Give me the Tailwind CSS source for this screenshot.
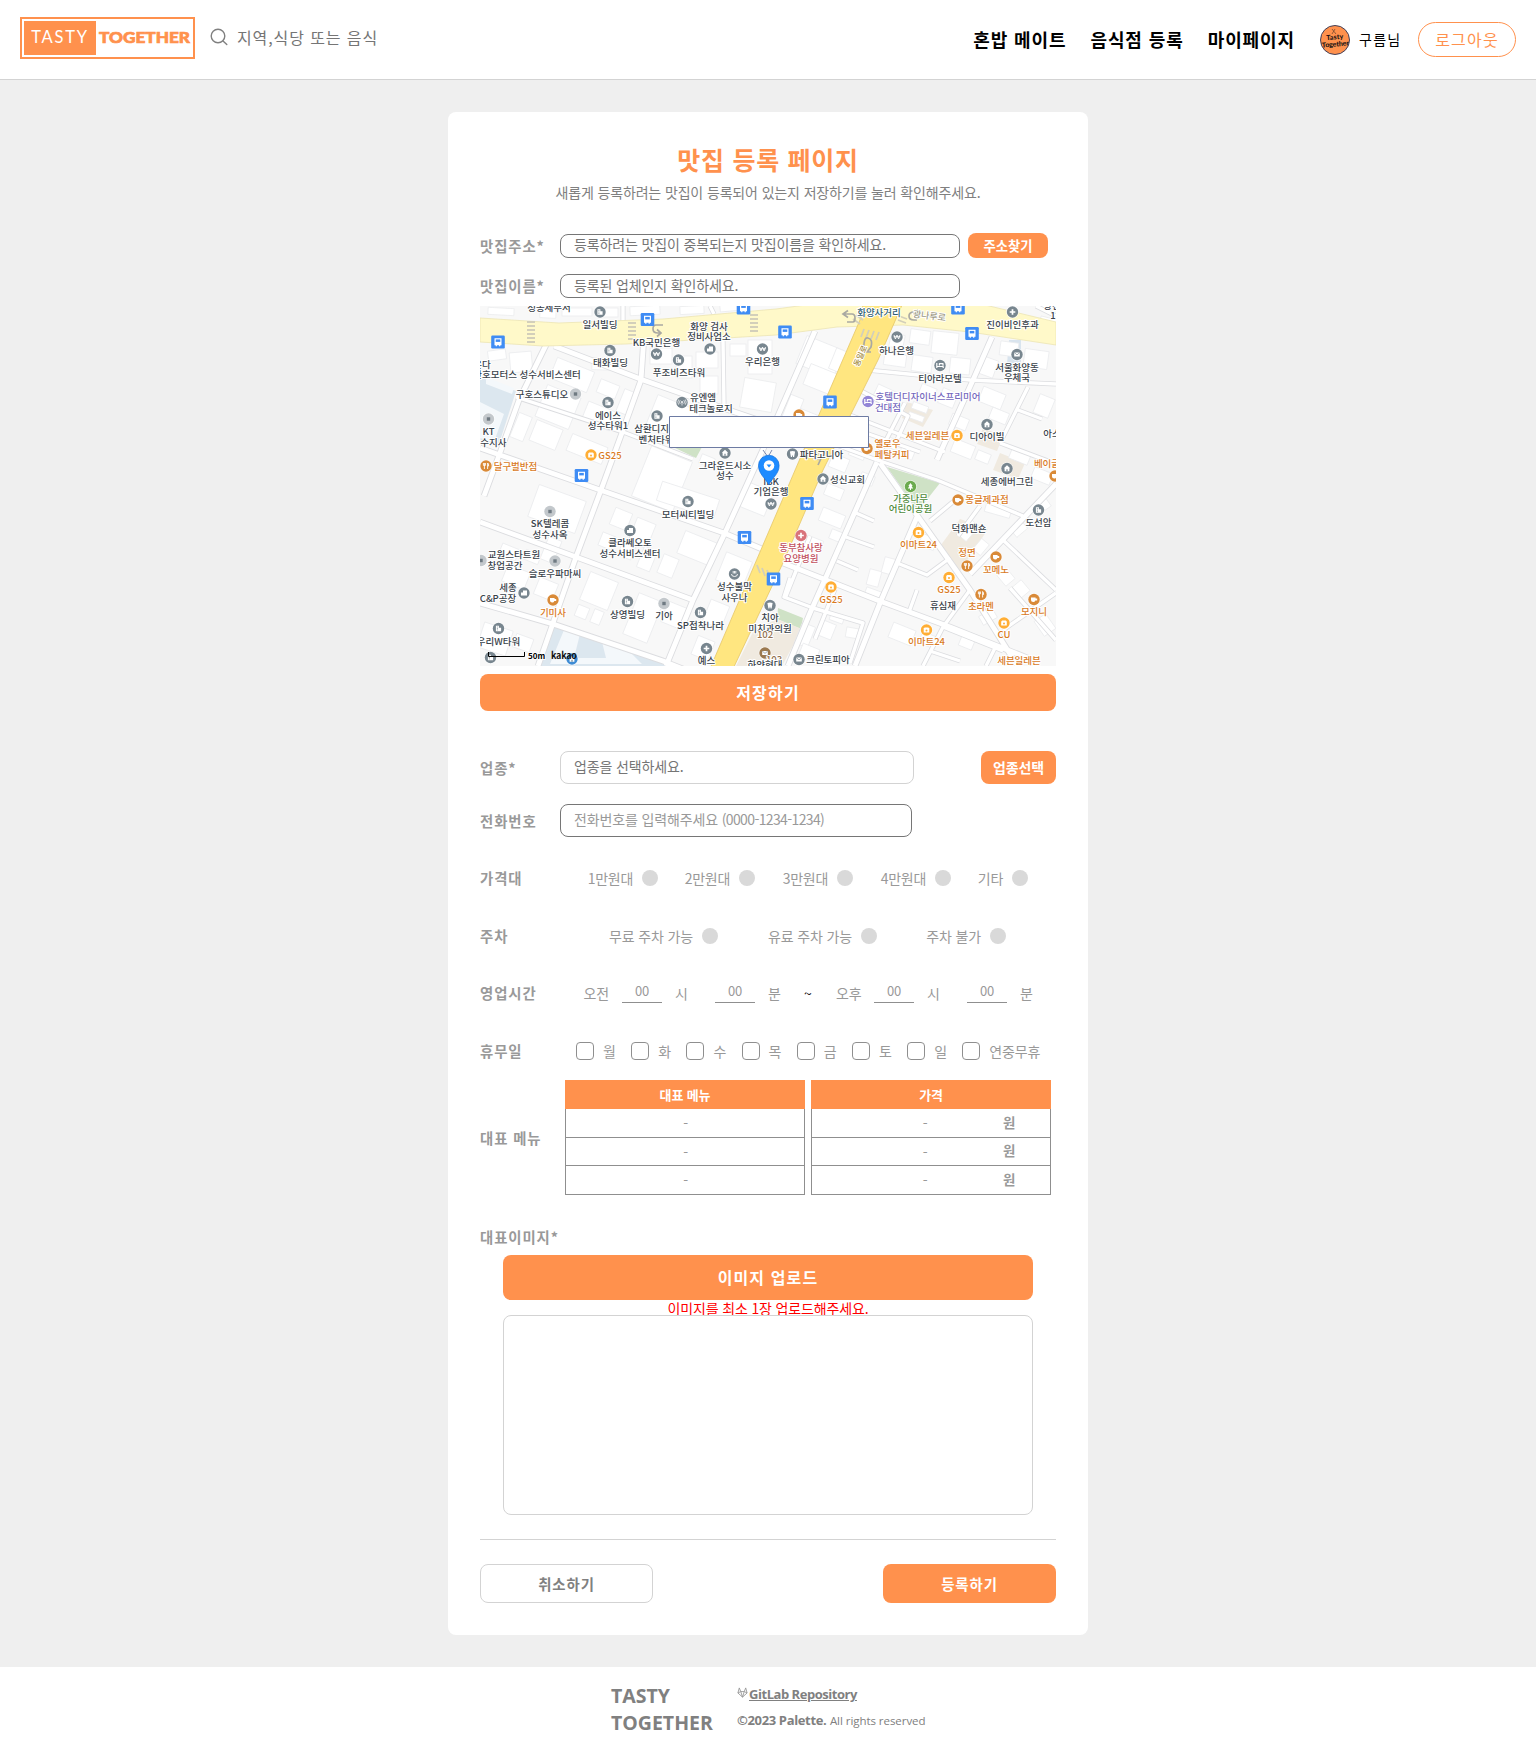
<!DOCTYPE html>
<html lang="ko">
<head>
<meta charset="utf-8">
<title>맛집 등록 페이지</title>
<script src="https://cdn.jsdelivr.net/npm/@tailwindcss/browser@4"></script>
</head>
<body class="bg-[#efefef] font-['Noto_Sans_CJK_KR',sans-serif] text-sm leading-none tracking-[-0.14px] text-[#999]">

<header class="flex h-20 items-center border-b border-[#d3d3d3] bg-white px-5">
  <div class="mb-1 flex h-[42px] w-[175px] items-center border-2 border-[#ff914d] p-0.5 font-[Lato,sans-serif]">
    <div class="flex h-[34px] w-[72px] shrink-0 items-center justify-center bg-[#ff914d] text-[16.500px] tracking-[1.800px] text-white">TASTY</div>
    <svg class="ml-0.5 h-[34px] w-[94px]" viewBox="0 0 94 34"><text x="1" y="22.5" textLength="92" lengthAdjust="spacingAndGlyphs" font-family="Lato, sans-serif" font-weight="900" font-size="16" letter-spacing="0" fill="#ff914d" stroke="#ff914d" stroke-width=".7">TOGETHER</text></svg>
  </div>
  <svg class="mb-1.5 ml-[15px] size-[18px]" viewBox="0 0 18 18" fill="none" stroke="#808080" stroke-width="1.4" stroke-linecap="round"><circle cx="8" cy="8" r="6.8"/><path d="M13 13l3.8 3.6"/></svg>
  <span class="mb-[5px] ml-[9px] text-base leading-none tracking-[.9px] text-[#757575]">지역,식당 또는 음식</span>
  <nav class="ml-auto flex items-center text-black">
    <span class="mr-6 mb-0.5 text-lg leading-none font-bold tracking-[.9px]">혼밥 메이트</span>
    <span class="mr-6 mb-0.5 text-lg leading-none font-bold tracking-[.9px]">음식점 등록</span>
    <span class="mr-[25px] mb-0.5 text-lg leading-none font-bold tracking-[.9px]">마이페이지</span>
    <svg class="size-[30px]" viewBox="0 0 30 30"><circle cx="15" cy="15" r="14.5" fill="#ff914d" stroke="#41405a"/><path d="M12 4l4 5M15 4l-3 5" stroke="#7a4a30" stroke-width=".8"/><g font-family="Lato, sans-serif" font-weight="900" font-size="7" fill="#1d1414" text-anchor="middle" transform="rotate(-5 15 15)"><text x="15" y="14.5" textLength="17">Tasty</text><text x="15" y="21.5" textLength="27" lengthAdjust="spacingAndGlyphs">Together</text></g></svg>
    <span class="mb-px ml-[9px] w-[59px] tracking-[1.300px]">구름님</span>
    <button class="flex h-[35px] w-[98px] items-center justify-center rounded-full border border-[#ff914d] pb-0.5 text-base leading-none tracking-[1.200px] text-[#ff914d]">로그아웃</button>
  </nav>
</header>

<main class="mx-auto my-8 flex w-[640px] flex-col rounded-lg bg-white p-8">
  <h1 class="flex h-8 items-center justify-center pb-0.5 text-[25px] leading-none font-bold tracking-[.7px] text-[#ff914d]">맛집 등록 페이지</h1>
  <p class="mt-[7px] flex h-5 items-center justify-center pb-0.5 text-[#808080]">새롭게 등록하려는 맛집이 등록되어 있는지 저장하기를 눌러 확인해주세요.</p>

  <div class="mt-[30px] flex h-[25px] items-center">
    <span class="w-20 pt-px text-[14.4px] font-bold tracking-[.9px]">맛집주소*</span>
    <div class="flex h-6 w-[400px] items-center rounded-lg border border-[#767676] px-[13px] pb-[3px] text-[#757575]">등록하려는 맛집이 중복되는지 맛집이름을 확인하세요.</div>
    <button class="ml-2 flex h-[25px] w-20 items-center justify-center rounded-lg bg-[#ff914d] text-[13.33px] font-bold tracking-normal text-white">주소찾기</button>
  </div>
  <div class="mt-4 flex h-6 items-center">
    <span class="w-20 text-[14.4px] font-bold tracking-[.9px]">맛집이름*</span>
    <div class="flex h-6 w-[400px] items-center rounded-lg border border-[#767676] px-[13px] pb-[3px] text-[#757575]">등록된 업체인지 확인하세요.</div>
  </div>

  <svg id="map" class="mt-2 h-[360px] w-[576px] tracking-normal" viewBox="0 0 576 360" font-family="'Noto Sans CJK KR', sans-serif">
    <defs>
      <g id="bus"><rect x="-6.8" y="-6.5" width="13.6" height="13" rx="1.2" fill="#3f8cf4"/><path d="M-3.5-3.8h7v7h-1.2v1h-1.2v-1h-2.2v1h-1.2v-1h-1.2z" fill="#fff"/><path d="M-2.3-2.6h4.6v2.5h-4.6z" fill="#3f8cf4"/></g>
      <g id="bld"><path d="M-2.6 2.8v-5.6h3v2h2.2v3.6z" fill="#fff"/><path d="M-1.6-1.5h1M-1.6 0h1M-1.6 1.4h1" stroke="#78868f" stroke-width=".7"/></g>
      <g id="won"><path d="M-3-2l1.4 4L0-2l1.6 4L3-2M-3.4-.2h6.8" fill="none" stroke="#fff" stroke-width=".9"/></g>
      <g id="car"><path d="M-3 2.4v-3h2v-2h4v5z" fill="#fff"/></g>
      <g id="ant"><path d="M0-.5v3.500M-1.800-2.400q-1.400 1.800 0 3.800M1.800-2.400q1.400 1.800 0 3.800M-3.300-3q-1.800 2.600 0 5.200M3.300-3q1.800 2.600 0 5.200" fill="none" stroke="#fff" stroke-width=".7"/><circle cy="-.6" r=".9" fill="#fff"/></g>
      <g id="sq"><rect x="-1.7" y="-1.7" width="3.4" height="3.4" fill="#6f7a82"/></g>
      <g id="cross"><path d="M0-2.8v5.6M-2.8 0h5.6" stroke="#fff" stroke-width="1.7"/></g>
      <g id="bed"><path d="M-3.2-2.4v4.8M-3.2 1h6.4v1.4M-.6 0v-1.8h3.6v2" fill="none" stroke="#fff" stroke-width="1.2"/></g>
      <g id="spa"><path d="M-3 0q0 2.500 3 2.500T3 0M-1.300-3v2.500M0-3v2.500M1.300-3v2.500" fill="none" stroke="#fff" stroke-width=".9"/></g>
      <g id="home"><path d="M-3.200-.2L0-3.200l3.200 3h-.8v3h-4.800v-3z" fill="#fff"/><path d="M-.6 2.800V.8H.6v2z" fill="#78868f"/></g>
      <g id="store"><path d="M-2.8 2.6v-4l1-1.2h3.6l1 1.2v4z" fill="#fff"/><circle cy=".5" r="1" fill="#ffae35"/></g>
      <g id="cup"><path d="M-3-2h4.6v1h1.6v2H1.4Q.8 2.6-.8 2.6-3 2.6-3 .6z" fill="#fff"/></g>
      <g id="fork"><path d="M-1.6-3v6M-2.6-3v2.4h2V-3M1.6 3v-6q1.2.6 1 3h-1" fill="none" stroke="#fff" stroke-width=".9"/></g>
      <g id="tree"><path d="M0-3.4l2.2 3h-1L2.6 2H.5v1.4h-1V2h-2.1l1.4-2.4h-1z" fill="#fff"/></g>
      <g id="mail"><path d="M-2.8-2h5.6v4h-5.6z" fill="#fff"/><path d="M-2.8-2L0 .4 2.8-2" fill="none" stroke="#78868f" stroke-width=".7"/></g>
      <g id="tooth"><path d="M-2.6-2.4Q0-3.4 2.6-2.4L1.6 3H.6L0 .8-.6 3h-1z" fill="#fff"/></g>
      <clipPath id="clip"><path d="M0 0h576v360H0z"/></clipPath>
    </defs>
    <g clip-path="url(#clip)">
      <path d="M0 0h576v360H0z" fill="#f8f8f8"/>
      <path d="M0 71l36 14-18 56-18-6zM74 321l112 36 8 3H58z" fill="#dce7ef"/>
      <path d="M6 71l28 11-2 6-26-10zM84 324l16 4-6 24h32l-4-16 30 12 10 10H70zM0 96l24 12-10 28-14-4z" fill="#f4f8fb"/>
      <path d="M407 161l53 16-22 28zM193 141h29l-6 11zM298 302l25 10-2 11-24-10z" fill="#cfe2c6"/>
      <path d="M427 96l26 8-10 17-21-9zM503 122l20 8-6 15-20-7zM520 147l25 10-7 16-25-9zM480 213l28 10-28 42-22-22zM297 313l25 10-20 37h-46l18-36z" fill="#f0eae0"/>
      <path d="M459 34h12v24h-14z" transform="translate(70 0)" fill="#d9e4ee"/>
      <g id="buildings" fill="#fff" stroke="#ebecee" stroke-width=".8"></g>
      <g fill="none" stroke-linejoin="round">
        <g id="casing" stroke="#dcdde0"></g>
        <g id="surface" stroke="#fff"></g>
      </g>
      <path d="M0 12l79 5 104-4L296 3l37-5h168l75 18v23l-86-13-67-7-66 2-61 8-150 9-83 2-63-4z" fill="#fff9c9" stroke="#ece4b4" stroke-width=".8"/>
      <path d="M383-1h39l-24 55-55 110-41 95-50 106h-23l96-224 55-127z" fill="#ffe680" stroke="#e6c766" stroke-width=".8"/>
      <g stroke="#d3cfba" stroke-width="1.8" fill="none">
        <path d="M47 16h8M47 20h8M47 24h8M47 28h8M47 32h8M47 36h8M148 17h8M148 21h8M148 25h8M148 29h8M148 33h8M270 9h8M270 13h8M270 17h8M270 21h8M270 25h8"/>
        <path d="M384 23l-3 8M389 24l-3 8M394 25l-3 8M399 26l-3 8M277 259l3 8M282 262l3 8M287 264l3 8M376 9l7 5M373 13l7 5M418 14l8 3M419 10l8 3M333 146l8 3M331 151l8 3"/>
      </g>
      <g fill="none" stroke="#aaa9a2" stroke-width="1.700"><path d="M183 19h-7q-3 0-3 4t5 4h2m-3-3.500l4 3.500-4 3.500M367 16h6q2 0 2-4t-3-4h-8m4-3.500L363 8l5 3.500M437 14h-3q-5 0-5-4t5-4h8m-4 3v-4l5 5h-5M384 45q-1-14 4-13t3 9l-4 5m-1-5v5h5M338 159l6-13"/></g>
      <g id="pois"></g>
      <path d="M283 144l5 7 4-7" fill="none" stroke="#7d8ab0" stroke-width="1"/>
      <path d="M288.700 179C285.500 172 278.500 168 278.500 159.500a10.300 10.300 0 0 1 20.600 0C299.100 168 292 172 288.700 179z" fill="#1e8bff" stroke="#1271dd" stroke-width=".7"/><circle cx="289" cy="159.500" r="5.300" fill="#fff"/><path d="M286.500 158.500h5l-2.500 3z" fill="#1e8bff"/>
      <path d="M189.500 110.500h199v31h-199z" fill="#fff" stroke="#6d7ba3"/>
      <path d="M8.500 346v4.500h36V346" fill="none" stroke="#000"/>
      <text x="48" y="353" font-size="8" font-weight="700" fill="#000" stroke="#fff" stroke-width="1.500" paint-order="stroke">50m</text>
      <text x="71" y="352.500" font-size="9" font-weight="700" fill="#111" textLength="26">kakao</text>
    </g>
  </svg>

  <button class="mt-2 flex h-[37px] items-center justify-center rounded-lg bg-[#ff914d] pb-px text-base leading-none font-bold tracking-[1.200px] text-white">저장하기</button>

  <div class="mt-10 flex h-[33px] items-center">
    <span class="w-20 pt-0.5 text-[14.4px] font-bold tracking-[.9px]">업종*</span>
    <div class="flex h-[33px] w-[354px] items-center rounded-lg border border-[#d3d3d3] px-[13px] pb-[3px] text-[#757575]">업종을 선택하세요.</div>
    <button class="ml-auto flex h-[33px] w-[75px] items-center justify-center rounded-lg bg-[#ff914d] pb-px text-sm leading-none font-bold text-white">업종선택</button>
  </div>
  <div class="mt-5 flex h-[33px] items-center">
    <span class="w-20 pt-0.5 text-[14.4px] font-bold tracking-[.9px]">전화번호</span>
    <div class="flex h-[33px] w-[352px] items-center rounded-lg border border-[#767676] px-[13px] pb-[3px]"><span>전화번호를 입력해주세요 <span class="tracking-[-.62px]">(0000-1234-1234)</span></span></div>
  </div>

  <div class="mt-[33px] flex h-4 items-center">
    <span class="w-20 text-[14.4px] font-bold tracking-[.9px]">가격대</span>
    <label class="flex w-[98px] items-center justify-end gap-[9px] tracking-[-.3px]">1만원대<i class="size-4 rounded-full bg-[#d9d9d9]"></i></label>
    <label class="flex w-[97px] items-center justify-end gap-[9px] tracking-[-.3px]">2만원대<i class="size-4 rounded-full bg-[#d9d9d9]"></i></label>
    <label class="flex w-[98px] items-center justify-end gap-[9px] tracking-[-.3px]">3만원대<i class="size-4 rounded-full bg-[#d9d9d9]"></i></label>
    <label class="flex w-[98px] items-center justify-end gap-[9px] tracking-[-.3px]">4만원대<i class="size-4 rounded-full bg-[#d9d9d9]"></i></label>
    <label class="flex w-[77px] items-center justify-end gap-[9px] tracking-[-.3px]">기타<i class="size-4 rounded-full bg-[#d9d9d9]"></i></label>
  </div>
  <div class="mt-[42px] flex h-4 items-center">
    <span class="w-20 text-[14.4px] font-bold tracking-[.9px]">주차</span>
    <label class="flex w-[158px] items-center justify-end gap-[9px]">무료 주차 가능<i class="size-4 rounded-full bg-[#d9d9d9]"></i></label>
    <label class="flex w-[159px] items-center justify-end gap-[9px]">유료 주차 가능<i class="size-4 rounded-full bg-[#d9d9d9]"></i></label>
    <label class="flex w-[129px] items-center justify-end gap-[9px]">주차 불가<i class="size-4 rounded-full bg-[#d9d9d9]"></i></label>
  </div>
  <div class="mt-[39px] mb-px flex h-5 items-center">
    <span class="w-20 pt-px text-[14.4px] font-bold tracking-[.9px]">영업시간</span>
    <span class="w-[49px] text-right">오전</span>
    <span class="ml-[13px] flex h-[19px] w-10 items-center justify-center border-b border-[#8f8f8f] pb-1 text-[13px]">00</span>
    <span class="ml-[13px] w-[13px]">시</span>
    <span class="ml-[27px] flex h-[19px] w-10 items-center justify-center border-b border-[#8f8f8f] pb-1 text-[13px]">00</span>
    <span class="ml-[13px] w-[13px]">분</span>
    <span class="ml-[23px] w-2 text-black">~</span>
    <span class="ml-6 w-[25px] whitespace-nowrap">오후</span>
    <span class="ml-[13px] flex h-[19px] w-10 items-center justify-center border-b border-[#8f8f8f] pb-1 text-[13px]">00</span>
    <span class="ml-[13px] w-[13px]">시</span>
    <span class="ml-[27px] flex h-[19px] w-10 items-center justify-center border-b border-[#8f8f8f] pb-1 text-[13px]">00</span>
    <span class="ml-[13px] w-[13px]">분</span>
  </div>
  <div class="mt-[38px] flex h-[18px] items-center">
    <span class="w-24 text-[14.4px] font-bold tracking-[.9px]">휴무일</span>
    <label class="flex w-[55.200px] items-center gap-[9px]"><i class="size-[18px] rounded border border-[#8f8f8f]"></i>월</label>
    <label class="flex w-[55.200px] items-center gap-[9px]"><i class="size-[18px] rounded border border-[#8f8f8f]"></i>화</label>
    <label class="flex w-[55.200px] items-center gap-[9px]"><i class="size-[18px] rounded border border-[#8f8f8f]"></i>수</label>
    <label class="flex w-[55.200px] items-center gap-[9px]"><i class="size-[18px] rounded border border-[#8f8f8f]"></i>목</label>
    <label class="flex w-[55.200px] items-center gap-[9px]"><i class="size-[18px] rounded border border-[#8f8f8f]"></i>금</label>
    <label class="flex w-[55.200px] items-center gap-[9px]"><i class="size-[18px] rounded border border-[#8f8f8f]"></i>토</label>
    <label class="flex w-[55.200px] items-center gap-[9px]"><i class="size-[18px] rounded border border-[#8f8f8f]"></i>일</label>
    <label class="flex items-center gap-[9px] whitespace-nowrap"><i class="size-[18px] rounded border border-[#8f8f8f]"></i>연중무휴</label>
  </div>

  <div class="mt-5 flex h-[115px] items-center">
    <span class="w-[85px] pt-0.5 text-[14.4px] font-bold tracking-[.9px]">대표 메뉴</span>
    <div class="w-60">
      <div class="flex h-[29px] items-center justify-center bg-[#ff914d] text-[13px] font-bold text-white">대표 메뉴</div>
      <div class="flex h-[29px] items-center justify-center border border-t-0 border-[#8f8f8f] pl-px">-</div>
      <div class="flex h-7 items-center justify-center border border-t-0 border-[#8f8f8f] pl-px">-</div>
      <div class="flex h-[29px] items-center justify-center border border-t-0 border-[#8f8f8f] pl-px">-</div>
    </div>
    <div class="ml-1.5 w-60">
      <div class="flex h-[29px] items-center justify-center bg-[#ff914d] text-[13px] font-bold text-white">가격</div>
      <div class="flex h-[29px] items-center border border-t-0 border-[#8f8f8f]"><span class="ml-7 w-[170px] text-center">-</span><span class="-ml-[7px] pb-px text-[13.500px] font-bold">원</span></div>
      <div class="flex h-7 items-center border border-t-0 border-[#8f8f8f]"><span class="ml-7 w-[170px] text-center">-</span><span class="-ml-[7px] pb-px text-[13.500px] font-bold">원</span></div>
      <div class="flex h-[29px] items-center border border-t-0 border-[#8f8f8f]"><span class="ml-7 w-[170px] text-center">-</span><span class="-ml-[7px] pb-px text-[13.500px] font-bold">원</span></div>
    </div>
  </div>

  <div class="mt-8 flex h-5 items-center text-[14.4px] font-bold tracking-[.9px]">대표이미지*</div>
  <div class="mx-[23px] mt-2 flex flex-col">
    <button class="flex h-[45px] items-center justify-center rounded-lg bg-[#ff914d] pb-px text-base leading-none font-bold tracking-[1.100px] text-white">이미지 업로드</button>
    <p class="flex h-[15px] items-center justify-center text-[#f00]">이미지를 최소 1장 업로드해주세요.</p>
    <div class="h-[200px] rounded-lg border border-[#d3d3d3]"></div>
  </div>
  <hr class="mt-6 h-px border-0 bg-[#d3d3d3]">
  <div class="mt-6 flex h-[39px] justify-between text-[14.4px] font-bold tracking-[.9px]">
    <button class="flex w-[173px] items-center justify-center rounded-lg border border-[#d3d3d3] pt-px text-[#808080]">취소하기</button>
    <button class="flex w-[173px] items-center justify-center rounded-lg bg-[#ff914d] pt-px text-white">등록하기</button>
  </div>
</main>

<footer class="h-20 bg-white pt-[15px] pl-[611px] font-['Open_Sans',sans-serif] text-[#808080]">
  <div class="flex">
    <div class="w-[126px] text-[19.500px] leading-[27px] font-bold tracking-normal">TASTY<br>TOGETHER</div>
    <div class="leading-[25px]">
      <div class="flex items-center">
        <svg class="mr-px mb-1 size-[11px]" viewBox="0 0 12 12" fill="none" stroke="#999" stroke-width="1" stroke-linejoin="round"><path d="M1 6.500L2.500 1l1.600 4h3.800l1.600-4L11 6.500 6 11zM4.100 5L6 11l1.900-6M1 6.500L4.100 5M11 6.500L7.900 5"/></svg>
        <a class="text-[13px] font-bold tracking-[-.46px] underline">GitLab Repository</a>
      </div>
      <div class="whitespace-nowrap"><b class="text-[13px] tracking-[-.35px]">©2023 Palette.</b> <span class="text-[11.500px] tracking-[-.05px]">All rights reserved</span></div>
    </div>
  </div>
</footer>

<script>
// Streets: main streets and lanes
const wide = 'M66 39L39 94 21 144 4 190M74 40l89 34 80 28 53 18M164 30l-3 44-18 50-22 60-25 67-23 66-15 43M0 142l123 43 121 42 45 19M0 216l96 35 117 43M335 25l-45 103-46 101-31 65-27 66M0 297l73 21 110 37 20 8M512 31l-19 43-36 80M397 156l-27 61-40 90-22 53M303 257l94 37 73 27 80 32M400 157l90 127 50 80M576 178l-86 90M437 211l-37 86-25 63';
const thin = 'M243 34l1 66M36 91l107 35 70 27M143 0v15M387 64l103 10 86 4M370 79l58 31-12 26M357 104l108 42M343 134l54 20 60 20 86 36M548 81l-28 56M538 104l24 9M520 137l56 21M523 234l53 50M490 284l-27 37-20 39M576 287l-53 37M417 257l30 12 23-17M376 207l18 8M366 231l28 10M357 255l21 9M310 272l-6 19 29 11 50 15-13 40M437 284l-8 22M530 282l46 52M463 321l60 24M380 125l60 21M425 97l-28 55M450 215l24-20M330 230l-24 60M450 345l30 10M355 283l-20 50M500 200l-22 30M516 340l-10 20M230 0l4 8M556 0l20 10';
casing.innerHTML = `<path d="${wide}" stroke-width="6.600"/><path d="${thin}" stroke-width="5"/>`;
surface.innerHTML = `<path d="${wide}" stroke-width="4.800"/><path d="${thin}" stroke-width="3.400"/>`;
const NS = 'http://www.w3.org/2000/svg';
// Building footprints: x, y, width, height, rotation
[[8,2,26,7,3],[60,2,16,10,3],[82,2,30,8,0],[120,2,18,9,0],[150,0,30,9,-3],[200,0,24,8,-3],[240,-2,22,7,-5],
[8,44,18,10,-8],[30,46,22,20,-5],[72,58,40,22,22],[112,52,24,12,2],[118,76,20,14,22],[140,84,12,24,22],[60,84,36,34,22],[104,100,30,20,22],[34,108,14,26,22],[52,118,28,22,22],[88,134,38,18,22],[170,42,22,16,0],[196,50,16,22,0],[216,46,22,16,0],[220,70,18,18,0],[170,96,46,34,22],[250,38,16,12,0],[268,34,24,34,0],[262,74,32,30,10],[160,146,44,54,22],[220,150,14,10,22],
[52,186,50,34,20],[20,240,18,12,22],[44,246,16,10,22],[64,232,14,24,22],[24,262,24,18,22],[56,274,20,18,22],[0,320,30,26,18],[34,330,18,14,20],[178,184,60,20,18],[132,204,18,18,22],[152,214,20,26,22],[120,228,14,14,22],[140,236,14,16,22],[160,242,14,22,22],[180,250,16,20,22],[200,230,34,24,22],[104,270,30,30,22],[96,300,12,12,22],[112,304,10,14,22],[150,290,26,44,22],[184,298,20,22,22],[226,296,20,24,22],[240,250,28,30,22],[214,332,18,20,22],[262,180,28,26,22],
[320,36,40,30,22],[326,62,28,22,22],[352,44,16,22,22],[306,90,14,24,22],[318,106,20,14,22],[410,28,14,14,12],[430,24,20,14,8],[452,26,26,22,6],[404,48,22,12,8],[432,50,20,16,8],[470,52,20,16,6],[520,36,18,14,8],[544,44,24,18,8],[500,52,16,18,20],[395,82,22,12,25],[432,98,16,7,20],[428,108,16,6,20],[460,84,16,16,22],[440,80,16,10,22],[500,84,24,16,22],[510,104,18,12,22],[556,90,16,20,22],[470,110,18,12,22],[472,136,22,14,22],[496,146,14,10,22],[530,144,20,12,22],[552,164,20,12,22],[350,150,18,14,22],[370,140,16,12,22],[380,168,14,10,22],[404,132,14,10,22],[420,142,14,10,22],
[345,180,18,12,22],[340,205,24,14,22],[350,225,14,10,22],[326,232,16,12,22],[388,264,12,16,15],[403,252,12,16,15],[385,284,20,8,20],[440,230,16,12,22],[478,218,20,12,-50],[494,236,14,10,-50],[505,200,26,9,16],[552,196,18,10,-35],[532,218,14,10,-40],[520,264,12,14,-40],[535,276,12,14,-40],[500,306,16,10,-30],[350,308,14,8,20],[366,322,14,10,10],[318,318,14,22,22],[340,316,14,16,22],[320,340,18,14,22],[410,320,24,16,22],[440,328,16,12,22],[558,310,14,18,-35],[480,330,14,12,22],[560,12,18,8,14]]
.forEach(([x,y,w,h,a]) => { const r = document.createElementNS(NS,'rect'); r.setAttribute('x',x); r.setAttribute('y',y); r.setAttribute('width',w); r.setAttribute('height',h); r.setAttribute('transform',`rotate(${a} ${x+w/2} ${y+h/2})`); buildings.appendChild(r); });

const G='#78868f', L='#c3c8cc', O='#ffae35', D='#d98a38', P='#9285d6', T='#39424a', OT='#d97a1e';
let out = '';
// Place icons: x, y, symbol, fill
[[120,6,'bld',G],[130,44.500,'bld',G],[176.500,48,'won',G],[198.500,54,'bld',G],[230,43,'car',G],[282.500,43,'won',G],[95.500,88,'sq',L],[128,96.500,'bld',G],[202,96.500,'ant',G],[177,110,'bld',G],[8.500,113,'sq',L],[111,149,'store',O],[6,160,'fork',D],[245,147,'home',G],[417,31,'won',G],[532.500,6,'cross',G],[537,48.500,'mail',G],[460,59.500,'bed',G],[388,95.500,'bed',P],[319,109,'cup',D],[507,118.500,'home',G],[477,129.500,'store',O],[387,142.500,'cup',D],[312.500,148,'tooth',G],[343,173,'home',G],[527,162.500,'home',G],[575,170,'cup',D],[430.500,180.500,'tree','#6cab4f'],
[70,205.500,'sq',L],[208,195.500,'bld',G],[150,224.500,'car',G],[291,198,'won',G],[1,254.500,'sq',L],[75,255,'sq',L],[44,287,'car',G],[73,294,'cup',D],[147.500,295.500,'bld',G],[184,297.500,'sq',L],[220.500,306.500,'bld',G],[18.500,322.500,'bld',G],[10.500,351.500,'bld',G],[92,353,'home','#3f8cd4'],[226.500,342.500,'cross',G],[254.500,268,'spa',G],[290,299.500,'tooth',G],[285,347,'mail','#9c7a50'],[319,353.500,'mail',G],
[321,229.500,'cross','#d9737b'],[351,281,'store',O],[438.500,226.500,'store',O],[478,194,'cup',D],[558.500,204,'bld',G],[487,260,'fork',D],[516,251,'cup',D],[469,271.500,'store',O],[501,288.500,'fork',D],[554,293.500,'cup',D],[524,317,'store',O],[446.500,324,'store',O]]
.forEach(([x,y,s,c]) => out += `<g transform="translate(${x} ${y})"><circle r="6.300" fill="#fff" opacity=".8"/><circle r="5.700" fill="${c}"/><use href="#${s}"/></g>`);
[[167.500,13.500],[263.500,2],[18,36],[305,26],[478,2],[492,27.500],[350,96],[101.500,169.500],[327,197.500],[264.500,231.500],[293.500,273]]
.forEach(([x,y]) => out += `<use href="#bus" x="${x}" y="${y}"/>`);
// Place names: centre x, baseline y, text, colour
[[69,5,'성동세무서'],[120,22,'일서빌딩'],[229,23.500,'화양 검사'],[229,34,'정비사업소'],[176.500,39.500,'KB국민은행'],[130.500,60,'태화빌딩'],[199,70,'푸조비즈타워'],[282.500,58.500,'우리은행'],[2,62,'온다'],[47,72,'간호모터스 성수서비스센터'],[62,91.500,'구호스튜디오'],[223,95,'유엔엠'],[231,105.500,'테크놀로지'],[128,112.500,'에이스'],[128,123,'성수타워1'],[176,126,'삼환디지털'],[176,136.500,'벤처타워'],[8.500,129,'KT'],[9,140,'성수지사'],[130,152.500,'GS25',OT],[35.500,163.500,'달구벌반점',OT],[245,162.500,'그라운드시소'],[245,173,'성수'],
[399,10,'화양사거리','#315f73'],[416.500,47.500,'하나은행'],[532.500,22,'진이비인후과'],[572,3,'광진'],[573,12.500,'1'],[460,75.500,'티아라모텔'],[537,64.500,'서울화양동'],[537,75,'우체국'],[448,94,'호텔더디자이너스프리미어','#7467bd'],[408,104.500,'건대점','#7467bd'],[447.500,132.500,'세븐일레븐',OT],[507,134,'디아이빌'],[572,131,'아스'],[407.500,141,'옐로우',OT],[412,151.500,'페탈커피',OT],[341.500,151.500,'파타고니아'],[367.500,176.500,'성신교회'],[527,178.500,'세종에버그린'],[567,161,'베이글',OT],
[291,178.500,'IBK'],[291,189,'기업은행'],[430.500,195.500,'가중나무','#4d8a3a'],[430.500,206,'어린이공원','#4d8a3a'],[507,197,'몽글제과점',OT],[558.500,219.500,'도선암'],[489,226,'덕화맨숀'],[438.500,242,'이마트24',OT],[487,250,'정면',OT],[516,267,'꼬메노',OT],[321,245,'동부참사랑','#c14f5d'],[321,255.500,'요양병원','#c14f5d'],[469,287,'GS25',OT],[463,302.500,'휴심재'],[501,304,'초라멘',OT],[554,308.500,'모지니',OT],[524,332,'CU',OT],[351,296.500,'GS25',OT],[446.500,339,'이마트24',OT],[539,357.500,'세븐일레븐',OT],[348,356.500,'크린토피아'],
[70,221,'SK텔레콤'],[70,231.500,'성수사옥'],[208,211.500,'모터씨티빌딩'],[150,240,'클라쎄오토'],[150,250.500,'성수서비스센터'],[34,252,'교원스타트원'],[25,262.500,'창업공간'],[75,270.500,'슬로우파마씨'],[28,285,'세종'],[18,295.500,'C&amp;P공장'],[73,309.500,'기미사',OT],[147.500,311.500,'상영빌딩'],[184,312.500,'기아'],[220.500,322.500,'SP접착나라'],[18.500,338.500,'우리W타워'],[254.500,284,'성수불막'],[254.500,294.500,'사우나'],[290,315,'치아'],[290,325.500,'미치과의원'],[285,331.500,'102','#937150'],[226.500,357.500,'예스'],[294,357,'103','#937150'],[285,362,'하얀현대']]
.forEach(([x,y,t,c=T]) => out += `<text x="${x}" y="${y}" fill="${c}">${t}</text>`);
out += '<text transform="translate(449 13) rotate(7)" fill="#a09c86" font-size="9">광나루로</text><text transform="translate(383 51) rotate(-66)" fill="#a38b3c" font-size="8">동일로</text>';
pois.innerHTML = out;
for (const [k,v] of Object.entries({'font-size':'9.5','font-weight':'500','text-anchor':'middle','stroke-linejoin':'round'})) pois.setAttribute(k,v);
for (const t of pois.querySelectorAll('text')) { t.setAttribute('stroke','#fff'); t.setAttribute('stroke-width','2'); t.setAttribute('paint-order','stroke'); }
</script>
</body>
</html>
